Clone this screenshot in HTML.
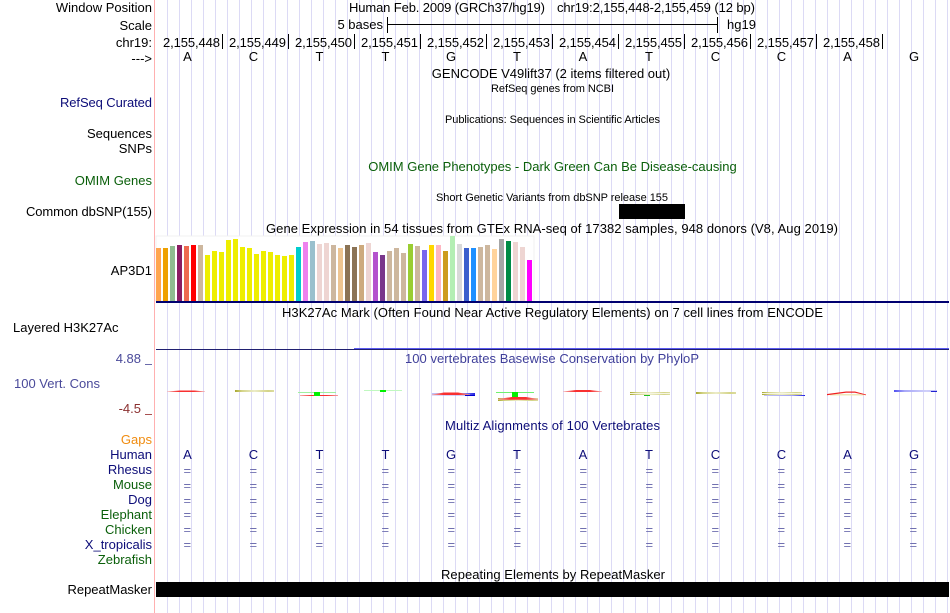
<!DOCTYPE html>
<html><head><meta charset="utf-8"><style>
html,body{margin:0;padding:0;background:#fff;width:950px;height:613px;overflow:hidden}
svg{display:block}
text{font-family:"Liberation Sans",sans-serif;font-size:13px;fill:#000}
.s{font-size:11px}
.e{text-anchor:end}
.m{text-anchor:middle}
.n{fill:#0c0c78}
.g{fill:#0a5f0a}
.q{fill:#7070b0}
</style></head><body>
<svg width="950" height="613" viewBox="0 0 950 613" xmlns="http://www.w3.org/2000/svg">
<defs>
<linearGradient id="ol"><stop offset="0" stop-color="#a8a830"/><stop offset=".18" stop-color="#d4d488"/><stop offset=".5" stop-color="#ecECc8"/><stop offset=".85" stop-color="#d4d488"/><stop offset="1" stop-color="#dcdca0"/></linearGradient>
<linearGradient id="re"><stop offset="0" stop-color="#f4b0b0"/><stop offset=".3" stop-color="#f83030"/><stop offset=".7" stop-color="#f83030"/><stop offset="1" stop-color="#f4a0a0"/></linearGradient>
<linearGradient id="bl"><stop offset="0" stop-color="#5050f0"/><stop offset=".25" stop-color="#a8a8f8"/><stop offset=".75" stop-color="#d0d0fa"/><stop offset="1" stop-color="#c0c0f8"/></linearGradient>
<linearGradient id="bd"><stop offset="0" stop-color="#c0c0f8"/><stop offset=".7" stop-color="#a0a0f4"/><stop offset="1" stop-color="#2020e0"/></linearGradient>
</defs>
<line x1="167" y1="306.5" x2="948" y2="306.5" stroke="#dcdaf5" stroke-width="613" stroke-dasharray="1 11"/>
<rect x="154" width="1" height="613" fill="#ffb0b0"/>

<!-- left labels -->
<text class="e" x="152" y="12">Window Position</text>
<text class="e" x="152" y="30">Scale</text>
<text class="e" x="152" y="47">chr19:</text>
<text class="e" x="152" y="63">---&gt;</text>
<text x="60" y="107" class="n" textLength="92">RefSeq Curated</text>
<text class="e" x="152" y="138">Sequences</text>
<text class="e" x="152" y="153">SNPs</text>
<text class="e g" x="152" y="185">OMIM Genes</text>
<text x="26" y="216" textLength="126">Common dbSNP(155)</text>
<text class="e" x="152" y="275">AP3D1</text>
<text x="13" y="332">Layered H3K27Ac</text>
<text class="e" x="141" y="363" style="fill:#4a4a9a">4.88</text>
<rect x="145" y="364" width="7" height="1" fill="#6a6aaa"/>
<text x="14" y="388" style="fill:#4a4a9a">100 Vert. Cons</text>
<text class="e" x="141" y="413" style="fill:#8b3030">-4.5</text>
<rect x="145" y="414" width="7" height="1" fill="#a85050"/>
<text class="e" x="152" y="444" style="fill:#f08c10">Gaps</text>
<text class="e n" x="152" y="459">Human</text>
<text class="e n" x="152" y="474">Rhesus</text>
<text class="e g" x="152" y="489">Mouse</text>
<text class="e n" x="152" y="504">Dog</text>
<text class="e g" x="152" y="519">Elephant</text>
<text class="e g" x="152" y="534">Chicken</text>
<text class="e n" x="152" y="549">X_tropicalis</text>
<text class="e g" x="152" y="564">Zebrafish</text>
<text class="e" x="152" y="594">RepeatMasker</text>

<!-- top -->
<text x="349" y="12" textLength="196">Human Feb. 2009 (GRCh37/hg19)</text>
<text x="557" y="12" textLength="198">chr19:2,155,448-2,155,459 (12 bp)</text>
<text class="e" x="383" y="29">5 bases</text>
<rect x="387" y="24" width="331" height="1" fill="#000"/>
<rect x="387" y="17" width="1" height="16" fill="#000"/>
<rect x="717" y="17" width="1" height="16" fill="#000"/>
<text x="727" y="29">hg19</text>

<text x="163" y="47" textLength="57">2,155,448</text>
<text x="229" y="47" textLength="57">2,155,449</text>
<text x="295" y="47" textLength="57">2,155,450</text>
<text x="361" y="47" textLength="57">2,155,451</text>
<text x="427" y="47" textLength="57">2,155,452</text>
<text x="493" y="47" textLength="57">2,155,453</text>
<text x="559" y="47" textLength="57">2,155,454</text>
<text x="625" y="47" textLength="57">2,155,455</text>
<text x="691" y="47" textLength="57">2,155,456</text>
<text x="757" y="47" textLength="57">2,155,457</text>
<text x="823" y="47" textLength="57">2,155,458</text>
<g fill="#000">
<rect x="222" y="34" width="1" height="15"/><rect x="288" y="34" width="1" height="15"/><rect x="354" y="34" width="1" height="15"/><rect x="420" y="34" width="1" height="15"/><rect x="486" y="34" width="1" height="15"/><rect x="552" y="34" width="1" height="15"/><rect x="618" y="34" width="1" height="15"/><rect x="684" y="34" width="1" height="15"/><rect x="750" y="34" width="1" height="15"/><rect x="816" y="34" width="1" height="15"/><rect x="882" y="34" width="1" height="15"/>
</g>
<text class="m" x="187.5" y="61">A</text><text class="m" x="253.5" y="61">C</text><text class="m" x="319.5" y="61">T</text><text class="m" x="385.5" y="61">T</text><text class="m" x="451" y="61">G</text><text class="m" x="517" y="61">T</text><text class="m" x="583" y="61">A</text><text class="m" x="649" y="61">T</text><text class="m" x="715.5" y="61">C</text><text class="m" x="781.5" y="61">C</text><text class="m" x="847.5" y="61">A</text><text class="m" x="914" y="61">G</text>

<!-- titles -->
<text class="m" x="551" y="78">GENCODE V49lift37 (2 items filtered out)</text>
<text x="491" y="92" class="s" textLength="123">RefSeq genes from NCBI</text>
<text x="445" y="123" class="s" textLength="215">Publications: Sequences in Scientific Articles</text>
<text class="m g" x="552.5" y="171">OMIM Gene Phenotypes - Dark Green Can Be Disease-causing</text>
<text x="436" y="201" class="s" textLength="232">Short Genetic Variants from dbSNP release 155</text>
<rect x="619" y="204" width="66" height="15" fill="#000"/>
<text x="266" y="233" textLength="572">Gene Expression in 54 tissues from GTEx RNA-seq of 17382 samples, 948 donors (V8, Aug 2019)</text>

<!-- GTEx bars -->
<rect x="156" y="236" width="378" height="65" fill="#fff" stroke="#f0f0f0"/>
<g>
<rect x="156" y="248" width="5" height="53" fill="#ffa54f"/>
<rect x="163" y="248" width="5" height="53" fill="#eea000"/>
<rect x="170" y="246" width="5" height="55" fill="#8fbc8f"/>
<rect x="177" y="245" width="5" height="56" fill="#8b1c62"/>
<rect x="184" y="246" width="5" height="55" fill="#ee6a50"/>
<rect x="191" y="245" width="5" height="56" fill="#ff0000"/>
<rect x="198" y="245" width="5" height="56" fill="#cdb79e"/>
<rect x="205" y="255" width="5" height="46" fill="#eeee00"/>
<rect x="212" y="251" width="5" height="50" fill="#eeee00"/>
<rect x="219" y="252" width="5" height="49" fill="#eeee00"/>
<rect x="226" y="240" width="5" height="61" fill="#eeee00"/>
<rect x="233" y="239" width="5" height="62" fill="#eeee00"/>
<rect x="240" y="247" width="5" height="54" fill="#eeee00"/>
<rect x="247" y="248" width="5" height="53" fill="#eeee00"/>
<rect x="254" y="254" width="5" height="47" fill="#eeee00"/>
<rect x="261" y="251" width="5" height="50" fill="#eeee00"/>
<rect x="268" y="252" width="5" height="49" fill="#eeee00"/>
<rect x="275" y="255" width="5" height="46" fill="#eeee00"/>
<rect x="282" y="256" width="5" height="45" fill="#eeee00"/>
<rect x="289" y="255" width="5" height="46" fill="#eeee00"/>
<rect x="296" y="247" width="5" height="54" fill="#00cdcd"/>
<rect x="303" y="242" width="5" height="59" fill="#ee82ee"/>
<rect x="310" y="241" width="5" height="60" fill="#9ac0cd"/>
<rect x="317" y="244" width="5" height="57" fill="#eed5d2"/>
<rect x="324" y="243" width="5" height="58" fill="#eed5d2"/>
<rect x="331" y="245" width="5" height="56" fill="#cdb79e"/>
<rect x="338" y="248" width="5" height="53" fill="#eec591"/>
<rect x="345" y="245" width="5" height="56" fill="#8b7355"/>
<rect x="352" y="247" width="5" height="54" fill="#8b7355"/>
<rect x="359" y="245" width="5" height="56" fill="#cdaa7d"/>
<rect x="366" y="243" width="5" height="58" fill="#eed5d2"/>
<rect x="373" y="252" width="5" height="49" fill="#b452cd"/>
<rect x="380" y="255" width="5" height="46" fill="#7a378b"/>
<rect x="387" y="251" width="5" height="50" fill="#cdb79e"/>
<rect x="394" y="248" width="5" height="53" fill="#cdb79e"/>
<rect x="401" y="253" width="5" height="48" fill="#cdb79e"/>
<rect x="408" y="244" width="5" height="57" fill="#9acd32"/>
<rect x="415" y="246" width="5" height="55" fill="#cdb79e"/>
<rect x="422" y="250" width="5" height="51" fill="#7a67ee"/>
<rect x="429" y="245" width="5" height="56" fill="#ffd700"/>
<rect x="436" y="245" width="5" height="56" fill="#ffb6c1"/>
<rect x="443" y="251" width="5" height="50" fill="#cd9b1d"/>
<rect x="450" y="236" width="5" height="65" fill="#b4eeb4"/>
<rect x="457" y="244" width="5" height="57" fill="#d9d9d9"/>
<rect x="464" y="248" width="5" height="53" fill="#3a5fcd"/>
<rect x="471" y="248" width="5" height="53" fill="#1e90ff"/>
<rect x="478" y="247" width="5" height="54" fill="#cdb79e"/>
<rect x="485" y="245" width="5" height="56" fill="#cdb79e"/>
<rect x="492" y="249" width="5" height="52" fill="#ffd39b"/>
<rect x="499" y="239" width="5" height="62" fill="#a6a6a6"/>
<rect x="506" y="241" width="5" height="60" fill="#008b45"/>
<rect x="513" y="242" width="5" height="59" fill="#eed5d2"/>
<rect x="520" y="247" width="5" height="54" fill="#eed5d2"/>
<rect x="527" y="260" width="5" height="41" fill="#ff00ff"/>
</g>
<rect x="156" y="301" width="793" height="2" fill="#000070"/>

<text x="282" y="317" textLength="541">H3K27Ac Mark (Often Found Near Active Regulatory Elements) on 7 cell lines from ENCODE</text>
<rect x="354" y="348" width="595" height="1" fill="#5a5af0"/>
<rect x="156" y="349" width="793" height="1" fill="#202070"/>
<text x="405" y="363" textLength="294" style="fill:#40409a">100 vertebrates Basewise Conservation by PhyloP</text>

<!-- conservation wiggles -->
<path d="M167 391.5L180 390.5H195L205 391.5V392H167Z" fill="url(#re)"/>
<rect x="235" y="390" width="39" height="2" fill="url(#ol)"/>
<rect x="298" y="392" width="38" height="1" fill="#a0f0a0"/>
<rect x="300" y="395" width="38" height="1" fill="url(#re)"/>
<rect x="364" y="390" width="38" height="1" fill="#c0f8c0"/>
<rect x="432" y="393" width="43" height="2.5" fill="url(#bd)"/>
<path d="M432 394.5L444 392.5H458L470 394.5V395H432Z" fill="url(#re)"/>
<rect x="465" y="395" width="10" height="1" fill="#0000d0"/>
<rect x="496" y="392" width="38" height="1" fill="#70f070"/>
<rect x="498" y="398" width="40" height="3" fill="url(#ol)"/>
<path d="M498 399L512 397H526L538 399V399.8H498Z" fill="url(#re)"/>
<path d="M563 391.5L576 390H590L602 391.5V392H563Z" fill="url(#re)"/>
<rect x="630" y="393" width="40" height="2" fill="#f4f4e0"/>
<rect x="630" y="392" width="40" height="1" fill="url(#ol)"/>
<rect x="630" y="394" width="40" height="1" fill="url(#ol)"/>
<rect x="644" y="395" width="6" height="1" fill="#20c020"/>
<rect x="696" y="392" width="40" height="2" fill="url(#ol)"/>
<rect x="762" y="393" width="40" height="2" fill="#f4f4e0"/>
<rect x="762" y="392" width="40" height="1" fill="url(#ol)"/>
<rect x="762" y="394" width="40" height="1" fill="url(#ol)"/>
<rect x="764" y="395" width="41" height="1" fill="url(#bd)"/>
<rect x="830" y="394" width="34" height="1.5" fill="#efe8b8"/>
<path d="M827 394L846 391.5H855L866 394.5V395.2L855 392.8H846L827 395.2Z" fill="#f02020"/>
<rect x="894" y="390" width="43" height="2" fill="url(#bl)"/>
<rect x="931" y="391" width="6" height="1" fill="#2020d0"/>
<g fill="#00f000">
<rect x="314" y="392" width="6" height="4"/>
<rect x="380" y="390" width="6" height="2"/>
<rect x="512" y="392" width="6" height="5"/>
</g>

<text x="445" y="430" class="n" textLength="215">Multiz Alignments of 100 Vertebrates</text>

<!-- human row -->
<text class="m n" x="187.5" y="459">A</text><text class="m n" x="253.5" y="459">C</text><text class="m n" x="319.5" y="459">T</text><text class="m n" x="385.5" y="459">T</text><text class="m n" x="451" y="459">G</text><text class="m n" x="517" y="459">T</text><text class="m n" x="583" y="459">A</text><text class="m n" x="649" y="459">T</text><text class="m n" x="715.5" y="459">C</text><text class="m n" x="781.5" y="459">C</text><text class="m n" x="847.5" y="459">A</text><text class="m n" x="914" y="459">G</text>

<!-- = rows -->
<g transform="translate(0.5,0)">
<text class="q" x="183" y="475">=</text><text class="q" x="249" y="475">=</text><text class="q" x="315" y="475">=</text><text class="q" x="381" y="475">=</text><text class="q" x="447" y="475">=</text><text class="q" x="513" y="475">=</text><text class="q" x="579" y="475">=</text><text class="q" x="645" y="475">=</text><text class="q" x="711" y="475">=</text><text class="q" x="777" y="475">=</text><text class="q" x="843" y="475">=</text><text class="q" x="909" y="475">=</text>
<text class="q" x="183" y="490">=</text><text class="q" x="249" y="490">=</text><text class="q" x="315" y="490">=</text><text class="q" x="381" y="490">=</text><text class="q" x="447" y="490">=</text><text class="q" x="513" y="490">=</text><text class="q" x="579" y="490">=</text><text class="q" x="645" y="490">=</text><text class="q" x="711" y="490">=</text><text class="q" x="777" y="490">=</text><text class="q" x="843" y="490">=</text><text class="q" x="909" y="490">=</text>
<text class="q" x="183" y="505">=</text><text class="q" x="249" y="505">=</text><text class="q" x="315" y="505">=</text><text class="q" x="381" y="505">=</text><text class="q" x="447" y="505">=</text><text class="q" x="513" y="505">=</text><text class="q" x="579" y="505">=</text><text class="q" x="645" y="505">=</text><text class="q" x="711" y="505">=</text><text class="q" x="777" y="505">=</text><text class="q" x="843" y="505">=</text><text class="q" x="909" y="505">=</text>
<text class="q" x="183" y="519">=</text><text class="q" x="249" y="519">=</text><text class="q" x="315" y="519">=</text><text class="q" x="381" y="519">=</text><text class="q" x="447" y="519">=</text><text class="q" x="513" y="519">=</text><text class="q" x="579" y="519">=</text><text class="q" x="645" y="519">=</text><text class="q" x="711" y="519">=</text><text class="q" x="777" y="519">=</text><text class="q" x="843" y="519">=</text><text class="q" x="909" y="519">=</text>
<text class="q" x="183" y="534">=</text><text class="q" x="249" y="534">=</text><text class="q" x="315" y="534">=</text><text class="q" x="381" y="534">=</text><text class="q" x="447" y="534">=</text><text class="q" x="513" y="534">=</text><text class="q" x="579" y="534">=</text><text class="q" x="645" y="534">=</text><text class="q" x="711" y="534">=</text><text class="q" x="777" y="534">=</text><text class="q" x="843" y="534">=</text><text class="q" x="909" y="534">=</text>
<text class="q" x="183" y="549">=</text><text class="q" x="249" y="549">=</text><text class="q" x="315" y="549">=</text><text class="q" x="381" y="549">=</text><text class="q" x="447" y="549">=</text><text class="q" x="513" y="549">=</text><text class="q" x="579" y="549">=</text><text class="q" x="645" y="549">=</text><text class="q" x="711" y="549">=</text><text class="q" x="777" y="549">=</text><text class="q" x="843" y="549">=</text><text class="q" x="909" y="549">=</text>
</g>

<text x="441" y="579" textLength="224">Repeating Elements by RepeatMasker</text>
<rect x="156" y="582" width="793" height="15" fill="#000"/>
</svg>
</body></html>
